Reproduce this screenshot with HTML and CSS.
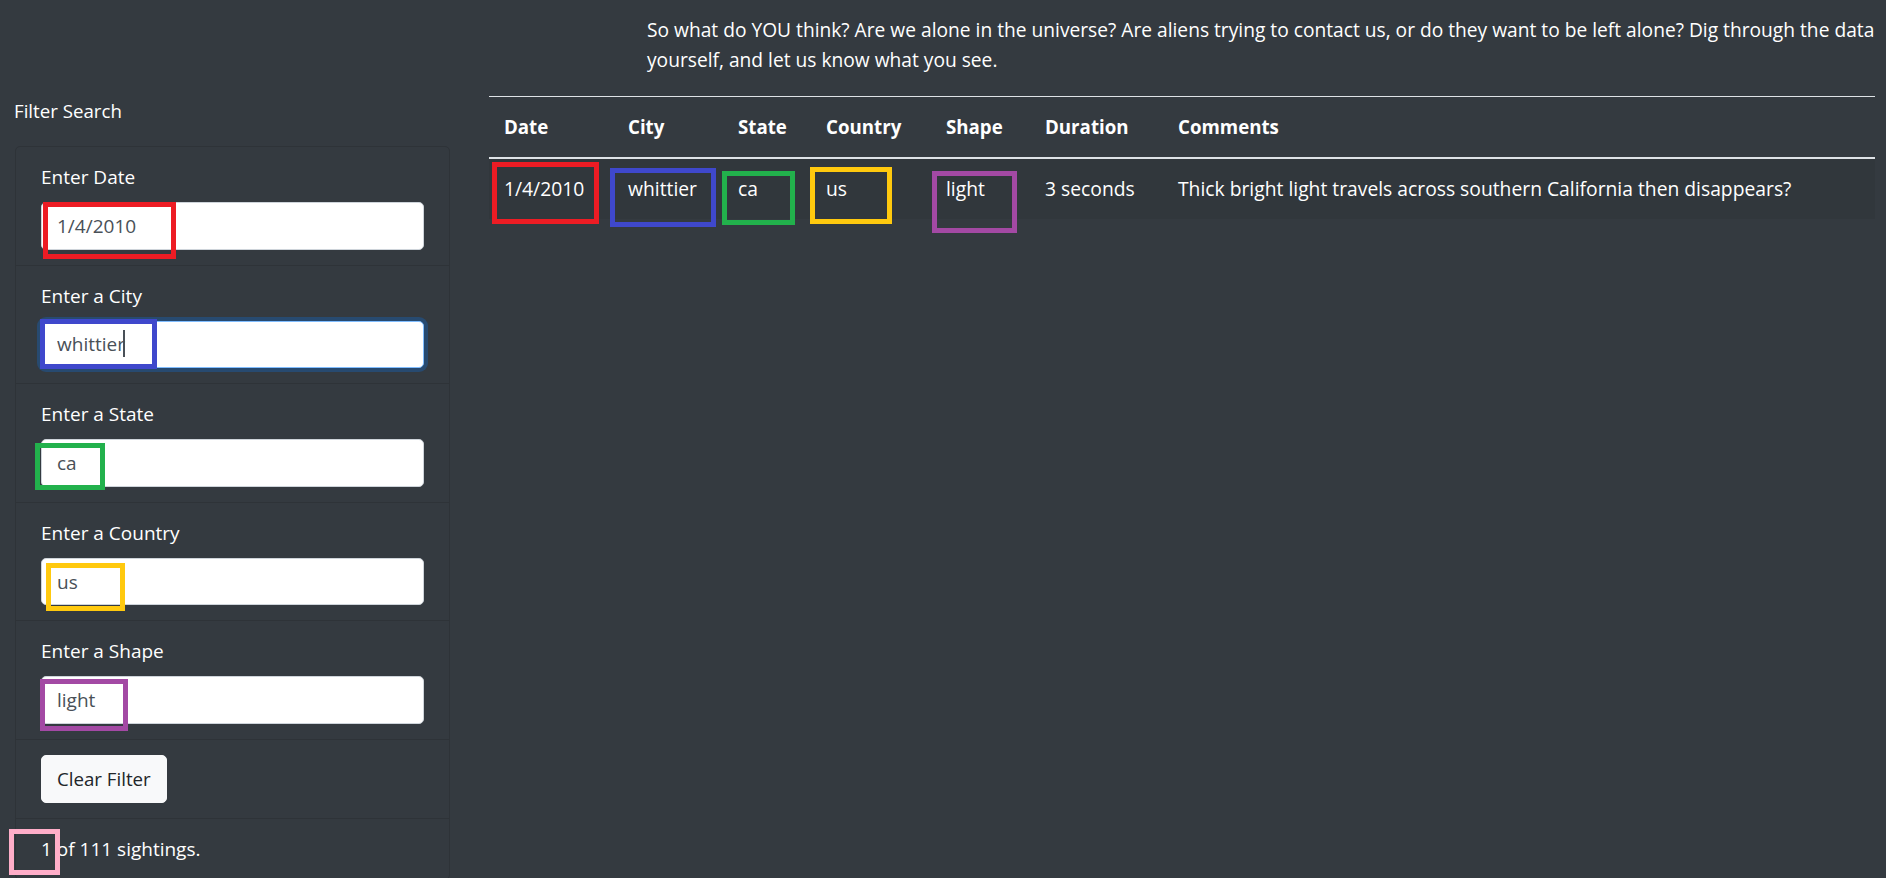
FILE: index.html
```html
<!DOCTYPE html>
<html lang="en">
<head>
<meta charset="utf-8">
<title>UFO Sightings</title>
<link rel="stylesheet" href="styles.css">
</head>
<body>
<div class="page">
  <p class="intro">So what do YOU think? Are we alone in the universe? Are aliens trying to contact us, or do they want to be left alone? Dig through the data yourself, and let us know what you see.</p>

  <div class="content">
    <aside class="sidebar">
      <p class="filter-title">Filter Search</p>
      <div class="card">
        <ul class="list">
          <li class="item">
            <label class="label" for="datetime">Enter Date</label>
            <input class="field" id="datetime" type="text" value="1/4/2010">
          </li>
          <li class="item">
            <label class="label" for="city">Enter a City</label>
            <input class="field field-focus" id="city" type="text" value="whittier">
          </li>
          <li class="item">
            <label class="label" for="state">Enter a State</label>
            <input class="field" id="state" type="text" value="ca">
          </li>
          <li class="item">
            <label class="label" for="country">Enter a Country</label>
            <input class="field" id="country" type="text" value="us">
          </li>
          <li class="item">
            <label class="label" for="shape">Enter a Shape</label>
            <input class="field" id="shape" type="text" value="light">
          </li>
          <li class="item">
            <button class="btn" type="button">Clear Filter</button>
          </li>
          <li class="item item-last">1 of 111 sightings.</li>
        </ul>
      </div>
    </aside>

    <main class="main">
      <table class="table">
        <colgroup>
          <col class="c-date">
          <col class="c-city">
          <col class="c-state">
          <col class="c-country">
          <col class="c-shape">
          <col class="c-duration">
          <col class="c-comments">
        </colgroup>
        <thead>
          <tr>
            <th>Date</th>
            <th>City</th>
            <th>State</th>
            <th>Country</th>
            <th>Shape</th>
            <th>Duration</th>
            <th>Comments</th>
          </tr>
        </thead>
        <tbody>
          <tr class="striped">
            <td>1/4/2010</td>
            <td>whittier</td>
            <td>ca</td>
            <td>us</td>
            <td>light</td>
            <td>3 seconds</td>
            <td>Thick bright light travels across southern California then disappears?</td>
          </tr>
        </tbody>
      </table>
    </main>
  </div>

  <div class="caret"></div>

  <div class="mark mark-red side-date"></div>
  <div class="mark mark-blue side-city"></div>
  <div class="mark mark-green side-state"></div>
  <div class="mark mark-yellow side-country"></div>
  <div class="mark mark-purple side-shape"></div>
  <div class="mark mark-pink side-count"></div>

  <div class="mark mark-red tbl-date"></div>
  <div class="mark mark-blue tbl-city"></div>
  <div class="mark mark-green tbl-state"></div>
  <div class="mark mark-yellow tbl-country"></div>
  <div class="mark mark-purple tbl-shape"></div>
</div>
</body>
</html>
```

FILE: styles.css
```css
html, body {
  margin: 0;
  padding: 0;
  overflow: hidden;
}

body {
  background: #343a40;
  color: #ffffff;
  font-family: "Open Sans", "Noto Sans", sans-serif;
  font-size: 19px;
  line-height: 30px;
}

.page {
  position: relative;
  width: 1886px;
  height: 878px;
  overflow: hidden;
}

.intro {
  margin: 15px 0 21px 647px;
  font-size: 19.2px;
}

.content {
  display: flex;
  align-items: flex-start;
}

.sidebar {
  flex: 0 0 436px;
  margin-left: 14px;
}

.filter-title {
  margin: 0 0 20px 0;
  font-size: 18.7px;
}

.card {
  margin-left: 1px;
  border: 1px solid #2e3338;
  border-radius: 5px;
  background: #343a40;
}

.list {
  list-style: none;
  margin: 0;
  padding: 0;
}

.item {
  padding: 15px 25px;
  border-bottom: 1px solid #2e3338;
}

.item-last {
  border-bottom: none;
}

.label {
  display: block;
  margin-bottom: 10px;
}

.field {
  display: block;
  box-sizing: border-box;
  width: 100%;
  height: 47.6px;
  padding: 7px 15px;
  border: 1px solid #ced4da;
  border-radius: 5px;
  background: #ffffff;
  color: #495057;
  font-family: inherit;
  font-size: 19px;
  line-height: 30px;
  outline: none;
}

.field-focus {
  border-color: #80bdff;
  box-shadow: 0 0 0 4px rgba(0, 123, 255, 0.25);
}

.btn {
  display: inline-block;
  box-sizing: border-box;
  height: 47.6px;
  padding: 7px 15px;
  border: 1px solid #f8f9fa;
  border-radius: 5px;
  background: #f8f9fa;
  color: #212529;
  font-family: inherit;
  font-size: 18.7px;
  line-height: 30px;
}

.main {
  margin-left: 39px;
  width: 1386px;
}

.table {
  width: 1386px;
  table-layout: fixed;
  border-collapse: collapse;
  color: #ffffff;
}

.c-date { width: 124px; }
.c-city { width: 110px; }
.c-state { width: 88px; }
.c-country { width: 120px; }
.c-shape { width: 99px; }
.c-duration { width: 133px; }
.c-comments { width: 712px; }

.table th,
.table td {
  padding: 15px;
  text-align: left;
  vertical-align: top;
  white-space: nowrap;
}

.table td {
  font-size: 19.3px;
}

.table thead th {
  font-size: 18.7px;
  font-weight: 700;
  border-top: 1px solid #dee2e6;
  border-bottom: 2.5px solid #dee2e6;
}

.striped {
  background: rgba(0, 0, 0, 0.05);
}

.caret {
  position: absolute;
  left: 123px;
  top: 330px;
  width: 1.5px;
  height: 27px;
  background: #495057;
}

.mark {
  position: absolute;
  box-sizing: border-box;
  border: 5px solid;
  pointer-events: none;
}

.mark-red { border-color: #ed1c24; }
.mark-blue { border-color: #3f48cc; }
.mark-green { border-color: #22b14c; }
.mark-yellow { border-color: #ffc90e; }
.mark-purple { border-color: #a349a4; }
.mark-pink { border-color: #ffaec9; }

.side-date { left: 43px; top: 202px; width: 133px; height: 57px; }
.side-city { left: 40px; top: 319px; width: 117px; height: 50px; }
.side-state { left: 35px; top: 443px; width: 70px; height: 47px; }
.side-country { left: 46px; top: 563px; width: 79px; height: 48px; }
.side-shape { left: 40px; top: 679px; width: 88px; height: 52px; }
.side-count { left: 9px; top: 829px; width: 51px; height: 46px; }

.tbl-date { left: 492px; top: 162px; width: 107px; height: 62px; }
.tbl-city { left: 610px; top: 168px; width: 106px; height: 59px; }
.tbl-state { left: 722px; top: 171px; width: 73px; height: 54px; }
.tbl-country { left: 810px; top: 167px; width: 82px; height: 57px; }
.tbl-shape { left: 932px; top: 171px; width: 85px; height: 62px; }
```
